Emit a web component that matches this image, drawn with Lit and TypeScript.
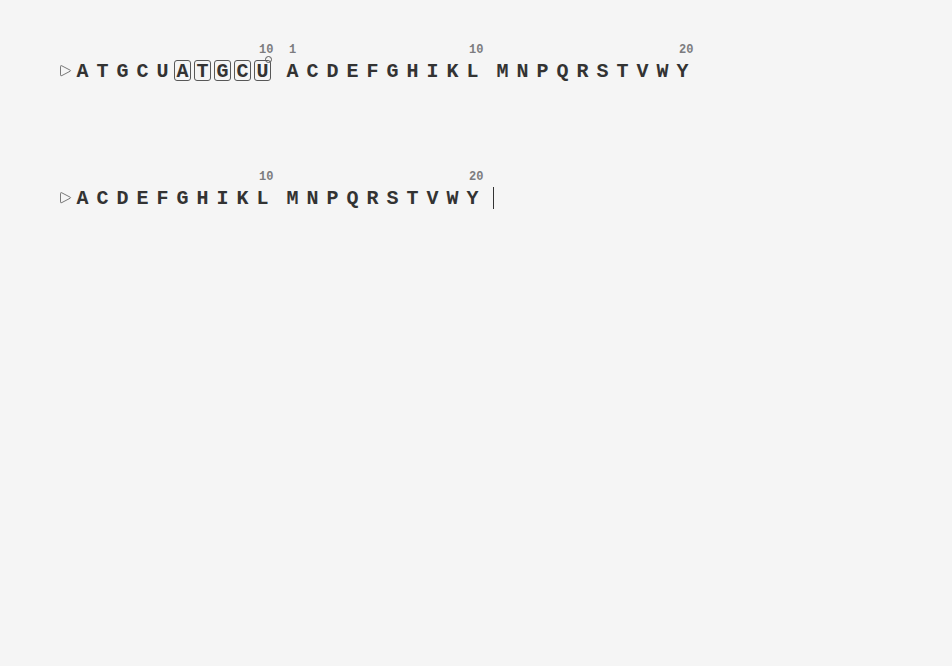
import { LitElement, html, css, svg, nothing } from "lit";
import { customElement, property } from "lit/decorators.js";
import { classMap } from "lit/directives/class-map.js";

interface Residue {
  letter: string;
  position?: number;
  boxed?: boolean;
  linked?: boolean;
}

const residues = (letters: string): Residue[] => [...letters].map((letter) => ({ letter }));

const numberLast = (block: Residue[], position: number): Residue[] =>
  block.map((r, i) => (i === block.length - 1 ? { ...r, position } : r));

const nucleotides: Residue[] = [
  ...residues("ATGCU"),
  ...residues("ATGCU").map((r, i) => ({ ...r, boxed: true, linked: i === 4 })),
];

const aminoFirst = residues("ACDEFGHIKL");
const aminoSecond = residues("MNPQRSTVWY");

@customElement("sequence-chain")
class SequenceChain extends LitElement {
  @property({ attribute: false }) blocks: Residue[][] = [];
  @property({ type: Boolean }) caret = false;

  static styles = css`
    :host {
      display: flex;
      flex-wrap: wrap;
      row-gap: 24px;
      color: #333;
      font-family: "Liberation Mono", "Courier New", monospace;
      font-weight: 700;
    }
    .start {
      width: 12px;
      height: 12px;
      margin-top: 22px;
    }
    .block {
      display: flex;
      margin-right: 10px;
    }
    .cell {
      width: 17px;
      padding: 0 1px 0 2px;
    }
    .position {
      height: 14px;
      padding-left: 5px;
      margin-bottom: 3px;
      font-size: 12px;
      line-height: 14px;
      color: #7c7c7f;
      white-space: nowrap;
    }
    .letter {
      position: relative;
      box-sizing: border-box;
      height: 21px;
      border: 1px solid transparent;
      border-radius: 3px;
      font-size: 20px;
      line-height: 22px;
      text-align: center;
    }
    .boxed {
      border-color: #585858;
    }
    .link {
      position: absolute;
      top: -5px;
      right: -2px;
      box-sizing: border-box;
      width: 7px;
      height: 7px;
      border: 1px solid #585858;
      border-radius: 50%;
    }
    .caret {
      width: 1px;
      height: 22px;
      margin: 17px 0 0 1px;
      background: #333;
    }
  `;

  private renderResidue(r: Residue) {
    return html`<div class="cell">
      <div class="position">${r.position ?? nothing}</div>
      <div class=${classMap({ letter: true, boxed: !!r.boxed })}>
        ${r.letter}${r.linked ? html`<span class="link"></span>` : nothing}
      </div>
    </div>`;
  }

  render() {
    return html`
      <svg class="start" viewBox="0 0 12 12" aria-hidden="true">
        ${svg`<path
          d="M.5 1.5Q.5 .2 1.8 .8L10.2 5.2Q11 5.7 10.2 6.2L1.8 10.6Q.5 11.2 .5 9.9Z"
          fill="none" stroke="#585858" stroke-width=".8" />`}
      </svg>
      ${this.blocks.map((b) => html`<div class="block">${b.map((r) => this.renderResidue(r))}</div>`)}
      ${this.caret ? html`<div class="caret"></div>` : nothing}
    `;
  }
}

@customElement("app-root")
class AppRoot extends LitElement {
  static styles = css`
    :host {
      display: flex;
      flex-direction: column;
      gap: 89px;
      box-sizing: border-box;
      min-height: 100vh;
      padding: 43px 60px;
      background: #f5f5f5;
    }
  `;

  render() {
    const top = [
      numberLast(nucleotides, 10),
      numberLast(aminoFirst, 10).map((r, i) => (i === 0 ? { ...r, position: 1 } : r)),
      numberLast(aminoSecond, 20),
    ];
    const bottom = [numberLast(aminoFirst, 10), numberLast(aminoSecond, 20)];
    return html`
      <sequence-chain .blocks=${top}></sequence-chain>
      <sequence-chain .blocks=${bottom} caret></sequence-chain>
    `;
  }
}
